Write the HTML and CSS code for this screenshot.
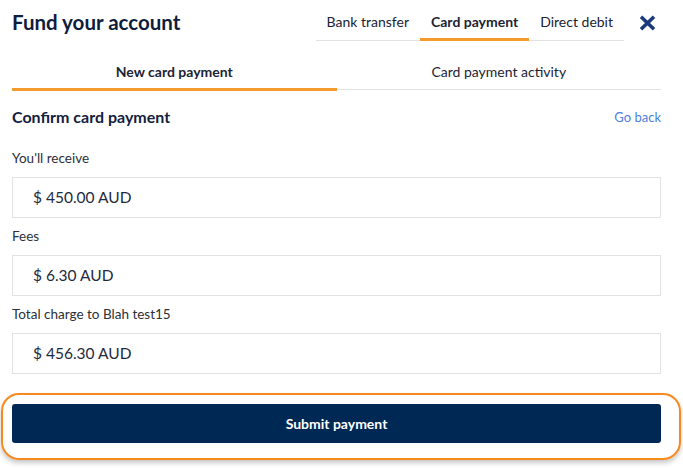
FILE: index.html
```html
<!DOCTYPE html>
<html>
<head>
<meta charset="utf-8">
<link rel="stylesheet" href="styles.css">
</head>
<body>
<div class="page">
  <header class="header">
    <h1 class="title">Fund your account</h1>
    <div class="header-right">
      <nav class="tabs">
        <span class="tab">Bank transfer</span>
        <span class="tab active">Card payment</span>
        <span class="tab">Direct debit</span>
      </nav>
      <button class="close" aria-label="Close">
        <svg width="17" height="16" viewBox="0 0 17 16"><path d="M2 1.8 L15 14.2 M15 1.8 L2 14.2" stroke="#1b3a7e" stroke-width="3.6" stroke-linecap="butt" fill="none"/></svg>
      </button>
    </div>
  </header>

  <nav class="subtabs">
    <span class="subtab active">New card payment</span>
    <span class="subtab">Card payment activity</span>
  </nav>

  <div class="confirm-row">
    <h2 class="confirm-title">Confirm card payment</h2>
    <a class="back" href="#">Go back</a>
  </div>

  <div class="fields">
    <div class="field">
      <div class="label">You'll receive</div>
      <div class="box">$ 450.00 AUD</div>
    </div>
    <div class="field">
      <div class="label">Fees</div>
      <div class="box">$ 6.30 AUD</div>
    </div>
    <div class="field">
      <div class="label">Total charge to Blah test15</div>
      <div class="box">$ 456.30 AUD</div>
    </div>
  </div>

  <div class="submit-wrap">
    <button class="submit">Submit payment</button>
    <span class="highlight"></span>
  </div>
</div>
</body>
</html>
```

FILE: styles.css
```css
* { box-sizing: border-box; }
html, body {
  margin: 0;
  padding: 0;
  background: #ffffff;
}
body {
  font-family: Lato, "Noto Sans", sans-serif;
  color: #1c2333;
}
.page {
  width: 649px;
  margin-left: 12px;
  padding-bottom: 30px;
}
.header {
  display: flex;
  justify-content: space-between;
  align-items: flex-start;
  height: 40px;
}
.title {
  margin: 10px 0 0 0;
  font-size: 20.5px;
  line-height: 24px;
  font-weight: 700;
  color: #0f1d3d;
}
.header-right {
  display: flex;
  align-items: flex-start;
}
.tabs {
  display: flex;
  border-bottom: 1px solid #e2e2e2;
}
.tab {
  font-size: 14px;
  line-height: 18px;
  padding: 13px 11px 7px 11px;
  border-bottom: 3px solid transparent;
  margin-bottom: -1px;
  color: #1c2333;
}
.tab.active {
  font-weight: 700;
  border-bottom-color: #f59a2c;
}
.close {
  border: 0;
  background: none;
  padding: 0;
  margin: 15px 5px 0 15px;
  width: 17px;
  height: 16px;
  display: block;
}
.close svg { display: block; }

.subtabs {
  display: grid;
  grid-template-columns: 1fr 1fr;
  margin-top: 14px;
  border-bottom: 1px solid #e2e2e2;
}
.subtab {
  text-align: center;
  font-size: 14px;
  line-height: 18px;
  padding: 9px 0 7px 0;
  border-bottom: 3px solid transparent;
  margin-bottom: -2px;
  color: #1c2333;
}
.subtab.active {
  font-weight: 700;
  border-bottom-color: #f59a2c;
}

.confirm-row {
  display: flex;
  justify-content: space-between;
  align-items: center;
  margin-top: 15px;
  height: 24px;
}
.confirm-title {
  margin: 0;
  font-size: 16px;
  line-height: 24px;
  font-weight: 700;
  color: #13203f;
}
.back {
  font-size: 13px;
  color: #4b80dd;
  text-decoration: none;
}

.fields {
  display: flex;
  flex-direction: column;
  gap: 9px;
  margin-top: 20px;
}
.label {
  font-size: 13.5px;
  line-height: 18px;
  color: #2b2f38;
  margin-bottom: 10px;
}
.box {
  height: 41px;
  border: 1px solid #e2e2e2;
  padding-left: 20px;
  font-size: 15.5px;
  line-height: 39px;
  color: #1e2a3e;
}

.submit-wrap {
  position: relative;
  margin-top: 30px;
}
.submit {
  display: block;
  width: 100%;
  height: 39px;
  border: 0;
  border-radius: 3px;
  background: #002855;
  color: #ffffff;
  font-family: Lato, "Noto Sans", sans-serif;
  font-size: 14px;
  font-weight: 700;
}
.highlight {
  position: absolute;
  left: -11px;
  right: -20px;
  top: -11px;
  bottom: -17px;
  border: 2px solid #f7891f;
  border-radius: 18px;
  box-shadow: 0 3px 5px rgba(0, 0, 0, 0.22);
  pointer-events: none;
}
```
